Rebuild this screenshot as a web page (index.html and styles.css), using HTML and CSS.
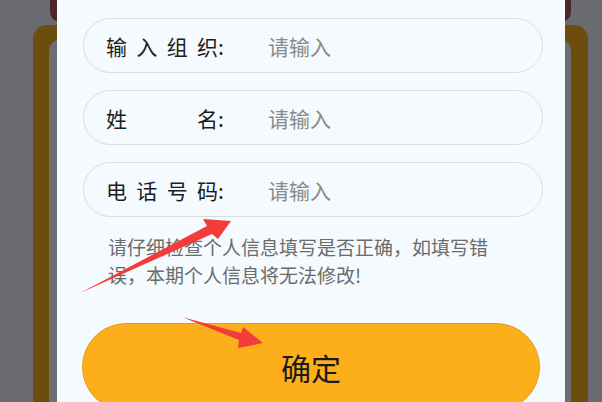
FILE: index.html
```html
<!DOCTYPE html>
<html lang="zh-CN">
  <head>
    <meta charset="UTF-8" />
    <meta name="viewport" content="width=device-width, initial-scale=1.0" />
    <title>填写个人信息</title>
    <link rel="stylesheet" href="styles.css">
  </head>
  <body>
    <div class="backdrop">
      <div class="topbar"></div>
      <div class="frame">
        <div class="frame-inner"></div>
      </div>
    </div>

    <div class="modal">
      <div class="field">
        <div class="label"><span class="label-text">输入组织</span>:</div>
        <input type="text" placeholder="请输入" />
      </div>
      <div class="field">
        <div class="label"><span class="label-text">姓名</span>:</div>
        <input type="text" placeholder="请输入" />
      </div>
      <div class="field">
        <div class="label"><span class="label-text">电话号码</span>:</div>
        <input type="tel" placeholder="请输入" />
      </div>

      <p class="notice">请仔细检查个人信息填写是否正确，如填写错误，本期个人信息将无法修改!</p>

      <button class="confirm">确定</button>
    </div>

    <!-- annotation arrows -->
    <svg class="marks" width="602" height="402" viewBox="0 0 602 402">
      <polygon points="80,293 207,226 203,219 231,221 218,239 212,234" />
      <polygon points="182,317 241,333 243,327 263,343 238,348 239,340" />
    </svg>
  </body>
</html>
```

FILE: styles.css
```css
* {
  margin: 0;
  padding: 0;
  box-sizing: border-box;
}

body {
  font-family: "Noto Sans CJK SC", "Noto Sans", sans-serif;
  background: #696b70;
  width: 602px;
  height: 402px;
  overflow: hidden;
  position: relative;
}

.backdrop {
  height: 100%;
  overflow: hidden;
}

.topbar {
  height: 22px;
  margin: 0 31px 0 50px;
  background: #4a2728;
  border-radius: 0 0 10px 10px;
}

.frame {
  margin: 3px 14px 0 33px;
  height: 377px;
  background: #6b4d0e;
  border-radius: 14px 14px 0 0;
  padding: 15px 17px 0 16px;
}

.frame-inner {
  height: 100%;
  background: #6d6f74;
  border-radius: 10px 10px 0 0;
}

.modal {
  position: absolute;
  top: 0;
  left: 57px;
  width: 508px;
  height: 402px;
  overflow: hidden;
  background: #f4fafe;
  padding: 18px 22px 0 26px;
}

.field {
  display: flex;
  align-items: center;
  height: 55px;
  margin-bottom: 17px;
  padding-left: 22px;
  border: 1.5px solid #dadde0;
  border-radius: 28px;
}

.label {
  display: flex;
  width: 162px;
  font-size: 21px;
  color: #1c1c1c;
}

.label-text {
  display: inline-block;
  width: 112px;
  text-align: justify;
  text-align-last: justify;
}

.field input {
  flex: 1;
  border: none;
  outline: none;
  background: transparent;
  font-family: inherit;
  font-size: 21px;
  color: #333;
}

.field input::placeholder {
  color: #8a8a8a;
}

.notice {
  width: 392px;
  margin: -1px 0 0 25px;
  font-size: 19px;
  line-height: 28px;
  color: #6b6b6b;
}

.confirm {
  display: block;
  width: 458px;
  height: 88px;
  margin: 34px 0 0 -1px;
  background: #fdae1b;
  border: 1px solid #e29d16;
  border-radius: 44px;
  font-family: inherit;
  font-size: 30px;
  color: #1a1a1a;
}

.marks {
  position: absolute;
  top: 0;
  left: 0;
  pointer-events: none;
}

.marks polygon {
  fill: #f23c3c;
}
```
